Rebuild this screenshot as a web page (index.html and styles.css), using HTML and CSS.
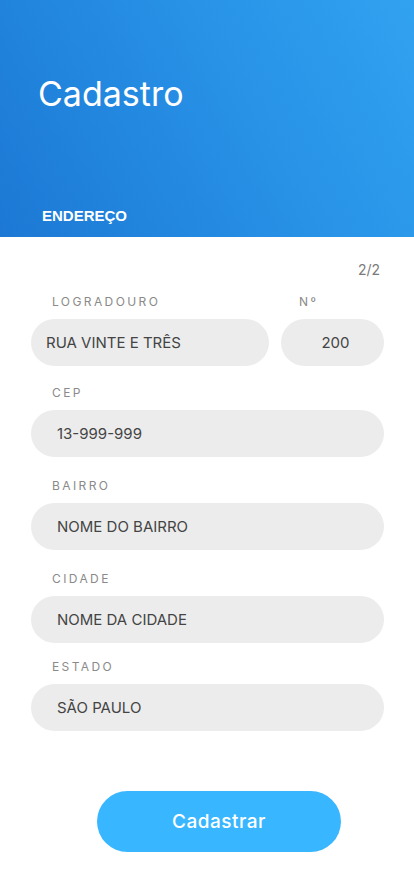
FILE: index.html
```html
<!DOCTYPE html>
<html lang="pt-BR">
<head>
<meta charset="utf-8">
<title>Cadastro</title>
<link rel="stylesheet" href="styles.css">
</head>
<body>
<header class="hero">
  <h1 class="hero-title">Cadastro</h1>
  <div class="hero-step">ENDEREÇO</div>
</header>
<main class="form">
  <div class="pager">2/2</div>
  <div class="row">
    <div class="field grow">
      <div class="label">LOGRADOURO</div>
      <div class="input tight">RUA VINTE E TRÊS</div>
    </div>
    <div class="field num">
      <div class="label num-label">Nº</div>
      <div class="input center">200</div>
    </div>
  </div>
  <div class="field">
    <div class="label">CEP</div>
    <div class="input">13-999-999</div>
  </div>
  <div class="field">
    <div class="label">BAIRRO</div>
    <div class="input">NOME DO BAIRRO</div>
  </div>
  <div class="field short">
    <div class="label">CIDADE</div>
    <div class="input">NOME DA CIDADE</div>
  </div>
  <div class="field last">
    <div class="label">ESTADO</div>
    <div class="input">SÃO PAULO</div>
  </div>
  <div class="actions">
    <button class="btn">Cadastrar</button>
  </div>
</main>
</body>
</html>
```
FILE: styles.css
```css
* { box-sizing: border-box; }
html, body { margin: 0; padding: 0; }
body {
  width: 414px;
  min-height: 896px;
  background: #fff;
  font-family: Inter, "Noto Sans", sans-serif;
}
.hero {
  height: 237px;
  background: linear-gradient(60deg, #1c78d4 0%, #2791e6 55%, #31a2f0 100%);
  display: flex;
  flex-direction: column;
  padding: 0 0 0 38px;
}
.hero-title {
  margin: 72px 0 0 0;
  font-size: 34px;
  font-weight: 400;
  color: #fff;
  line-height: 44px;
  letter-spacing: 0;
}
.hero-step {
  margin-top: auto;
  margin-left: 4px;
  margin-bottom: 12px;
  font-family: "Liberation Sans", Arial, sans-serif;
  font-weight: 700;
  font-size: 15px;
  color: #fff;
  line-height: 18px;
}
.form {
  padding: 24px 30px 0 31px;
  display: flex;
  flex-direction: column;
}
.pager {
  align-self: flex-end;
  margin-right: 4px;
  font-size: 14px;
  line-height: 17px;
  color: #7a7a7a;
  margin-bottom: 16px;
}
.row {
  display: flex;
  gap: 12px;
  margin-bottom: 19px;
}
.field { display: flex; flex-direction: column; margin-bottom: 21px; }
.row .field { margin-bottom: 0; }
.field.short { margin-bottom: 16px; }
.field.last { margin-bottom: 0; }
.grow { flex: 1; }
.num { width: 103px; }
.label {
  font-size: 12px;
  line-height: 16px;
  letter-spacing: 2.4px;
  color: #8a8a8a;
  padding-left: 21px;
  margin-bottom: 9px;
}
.num-label { padding-left: 18px; }
.input {
  height: 47px;
  border-radius: 24px;
  background: #ececec;
  display: flex;
  align-items: center;
  padding-left: 26px;
  font-size: 15px;
  color: #444;
}
.input.tight { padding-left: 15px; }
.input.center { justify-content: center; padding-left: 6px; }
.actions {
  display: flex;
  justify-content: flex-start;
  margin-top: 60px;
  padding-left: 66px;
}
.btn {
  width: 244px;
  height: 61px;
  border: none;
  border-radius: 31px;
  background: #38b6ff;
  color: #fff;
  font-family: Inter, "Noto Sans", sans-serif;
  font-size: 19px;
  font-weight: 500;
  letter-spacing: 0.5px;
}
```
